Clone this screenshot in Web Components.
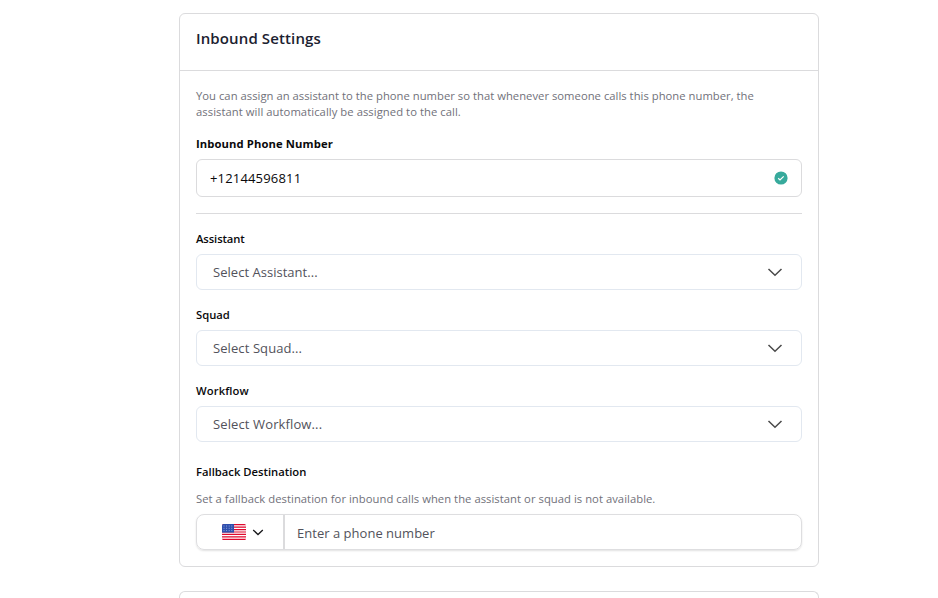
<!DOCTYPE html>
<html lang="en">
<head>
<meta charset="utf-8">
<title>Inbound Settings</title>
<style>
  body {
    margin: 0;
    background: #fff;
    color: #020817;
    font-family: "Open Sans", "Noto Sans", sans-serif;
  }
  main {
    width: 640px;
    margin-left: 179px;
    padding-top: 13px;
    display: flex;
    flex-direction: column;
    gap: 24px;
  }
</style>
</head>
<body>
<main>
  <settings-card heading="Inbound Settings">
    <help-text style="--fit: 0.02px">You can assign an assistant to the phone number so that whenever someone calls this phone number, the<br><span style="letter-spacing: 0.055px">assistant will automatically be assigned to the call.</span></help-text>
    <form-field label="Inbound Phone Number" class="number">
      <number-box>+12144596811</number-box>
    </form-field>
    <rule-line></rule-line>
    <form-field label="Assistant" style="--fit: -0.1px"><select-box>Select Assistant...</select-box></form-field>
    <form-field label="Squad"><select-box style="--fit: 0.09px">Select Squad...</select-box></form-field>
    <form-field label="Workflow" style="--fit: 0.1px"><select-box style="--fit: 0.12px">Select Workflow...</select-box></form-field>
    <form-field label="Fallback Destination" class="fallback">
      <help-text slot="help" style="--fit: 0.04px">Set a fallback destination for inbound calls when the assistant or squad is not available.</help-text>
      <phone-input placeholder="Enter a phone number"></phone-input>
    </form-field>
  </settings-card>
  <settings-card class="peek"></settings-card>
</main>

<script>
class BaseElement extends HTMLElement {
  constructor() {
    super();
    this.attachShadow({ mode: 'open' });
    this.shadowRoot.innerHTML = this.constructor.markup;
  }
}

class SettingsCard extends BaseElement {
  static markup = `
<style>
  :host {
    display: block;
    box-sizing: border-box;
    border: 1px solid #dbdbdd;
    border-radius: 6px;
    background: #fff;
  }
  /* only the top edge of the next card shows */
  :host(.peek) {
    height: 7px;
    border-bottom: 0;
    border-radius: 6px 6px 0 0;
  }
  :host(.peek) header, :host(.peek) .body { display: none; }
  header {
    box-sizing: border-box;
    height: 57px;
    padding: 12px 16px 0;
    border-bottom: 1px solid #dbdbdd;
  }
  h2 {
    margin: 0;
    font-size: 15px;
    font-weight: 600;
    line-height: 24px;
    letter-spacing: 0.12px;
    color: #1b2130;
  }
  .body {
    display: flex;
    flex-direction: column;
    padding: 17px 16px 16px;
  }
</style>
<header><h2></h2></header>
<div class="body"><slot></slot></div>
`;

  connectedCallback() {
    this.shadowRoot.querySelector('h2').textContent = this.getAttribute('heading') ?? '';
  }
}

class HelpText extends BaseElement {
  static markup = `
<style>
  :host {
    display: block;
    font-size: 11.25px;
    line-height: 16px;
    letter-spacing: var(--fit, 0);
    color: #71717a;
    white-space: nowrap;
  }
</style>
<slot></slot>
`;
}

class FormField extends BaseElement {
  static markup = `
<style>
  :host {
    display: block;
    margin-top: 17px;
  }
  :host(.number) {
    margin-top: 16px;
    --fit: 0.1px;
  }
  :host(.fallback) { margin-top: 22px; }
  .label {
    font-size: 11.25px;
    font-weight: 600;
    line-height: 16px;
    letter-spacing: var(--fit, 0);
    color: #09090b;
    margin-bottom: 7px;
  }
  :host(.number) .label { font-weight: 700; }
  :host(.fallback) .label { margin-bottom: 11px; }
  ::slotted([slot="help"]) { margin-bottom: 7px; }
</style>
<div class="label"></div>
<slot name="help"></slot>
<slot></slot>
`;

  connectedCallback() {
    this.shadowRoot.querySelector('.label').textContent = this.getAttribute('label');
  }
}

class NumberBox extends BaseElement {
  static markup = `
<style>
  :host {
    display: flex;
    align-items: center;
    justify-content: space-between;
    box-sizing: border-box;
    height: 38px;
    padding: 0 13px;
    border: 1px solid #dbdbdd;
    border-radius: 6px;
    font-size: 13px;
    letter-spacing: 0.17px;
    color: #09090b;
  }
  svg { display: block; }
</style>
<span><slot></slot></span>
<svg width="14" height="14" viewBox="0 0 14 14" aria-hidden="true">
  <circle cx="7" cy="7" r="6.6" fill="#37aa9c"/>
  <path d="M4.2 7.3 6 9 9.7 5.3" fill="none" stroke="#fff" stroke-width="1.2"/>
</svg>
`;
}

class RuleLine extends BaseElement {
  static markup = `
<style>
  :host {
    display: block;
    height: 1px;
    margin-top: 16px;
    background: #dbdbdd;
  }
</style>
`;
}

class SelectBox extends BaseElement {
  static markup = `
<style>
  :host {
    display: flex;
    align-items: center;
    justify-content: space-between;
    box-sizing: border-box;
    height: 36px;
    padding: 0 18px 0 16px;
    border: 1px solid #e2e8f0;
    border-radius: 6px;
    font-size: 13px;
    color: #52525b;
  }
  span { letter-spacing: var(--fit, 0); }
  svg { display: block; }
</style>
<span><slot></slot></span>
<svg width="16" height="16" viewBox="0 0 16 16" aria-hidden="true">
  <path d="M1.5 5 8 11.3 14.5 5" fill="none" stroke="#4a4a4a" stroke-width="1.5"/>
</svg>
`;

  connectedCallback() {
    // the field's own label spacing must not reach the value
    if (!this.style.getPropertyValue('--fit')) this.style.setProperty('--fit', '0.03px');
  }
}

class PhoneInput extends BaseElement {
  static markup = `
<style>
  :host {
    display: flex;
    box-sizing: border-box;
    height: 36px;
    border: 1px solid #dedee0;
    border-radius: 8px;
    box-shadow: 0 1px 2px rgba(0, 0, 0, .12);
    font-size: 13px;
    color: #52525b;
  }
  .country {
    display: flex;
    align-items: center;
    justify-content: center;
    gap: 6px;
    box-sizing: border-box;
    width: 88px;
    padding-left: 6px;
    border-right: 2px solid #dbdbdd;
  }
  .number {
    display: flex;
    align-items: center;
    padding: 2px 0 0 12px;
    letter-spacing: 0.02px;
  }
  svg { display: block; }
</style>
<div class="country">
  <svg width="24" height="16" viewBox="0 0 24 16" aria-label="United States">
    <clipPath id="round"><rect width="24" height="16" rx="1.5"/></clipPath>
    <g clip-path="url(#round)">
      <rect width="24" height="16" fill="#fff"/>
      <path d="M0 .62h24M0 3.08h24M0 5.54h24M0 8h24M0 10.46h24M0 12.92h24M0 15.38h24" stroke="#e0082d" stroke-width="1.23"/>
      <rect width="12" height="8.6" fill="#2e4fae"/>
      <path d="M1.5 2h10M1.5 4.3h10M1.5 6.6h10" stroke="#9fb1e2" stroke-width=".9" stroke-dasharray="1 1.6"/>
    </g>
  </svg>
  <svg width="12" height="12" viewBox="0 0 12 12" aria-hidden="true">
    <path d="M1.2 4 6 8.5 10.8 4" fill="none" stroke="#18181b" stroke-width="1.3"/>
  </svg>
</div>
<div class="number"></div>
`;

  connectedCallback() {
    this.shadowRoot.querySelector('.number').textContent = this.getAttribute('placeholder');
  }
}

customElements.define('settings-card', SettingsCard);
customElements.define('help-text', HelpText);
customElements.define('form-field', FormField);
customElements.define('number-box', NumberBox);
customElements.define('rule-line', RuleLine);
customElements.define('select-box', SelectBox);
customElements.define('phone-input', PhoneInput);
</script>
</body>
</html>
